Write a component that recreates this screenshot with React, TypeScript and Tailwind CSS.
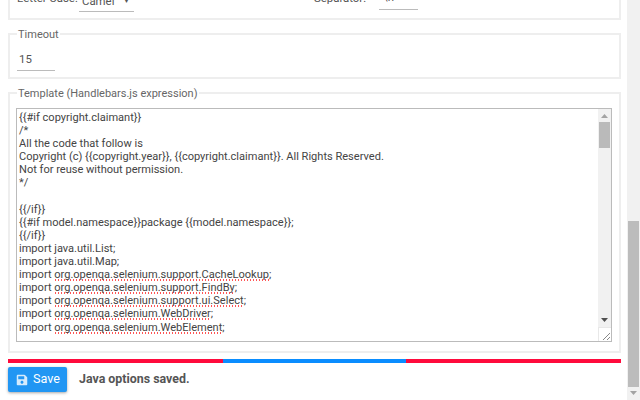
import { FaSave } from "react-icons/fa"

type Line = { text?: string; pre?: string; typo?: string; post?: string }

const lines: Line[] = [
  { text: "{{#if copyright.claimant}}" },
  { text: "/*" },
  { text: "All the code that follow is" },
  { text: "Copyright (c) {{copyright.year}}, {{copyright.claimant}}. All Rights Reserved." },
  { text: "Not for reuse without permission." },
  { text: "*/" },
  { text: "" },
  { text: "{{/if}}" },
  { text: "{{#if model.namespace}}package {{model.namespace}};" },
  { text: "{{/if}}" },
  { text: "import java.util.List;" },
  { text: "import java.util.Map;" },
  { pre: "import ", typo: "org.openqa.selenium.support.CacheLookup", post: ";" },
  { pre: "import ", typo: "org.openqa.selenium.support.FindBy", post: ";" },
  { pre: "import ", typo: "org.openqa.selenium.support.ui.Select", post: ";" },
  { pre: "import ", typo: "org.openqa.selenium.WebDriver", post: ";" },
  { pre: "import ", typo: "org.openqa.selenium.WebElement", post: ";" },
]

function Group({ legend, children, className }: { legend?: string; children: React.ReactNode; className?: string }) {
  return (
    <fieldset className={"shrink-0 border-2 border-[#eeeeee] pl-[6px] pr-[7px] " + (className ?? "")}>
      {legend && (
        <legend className="ml-[1px] px-[1px] text-[11px] leading-[14px] text-[#666]">
          <span className="relative top-[1px]">{legend}</span>
        </legend>
      )}
      {children}
    </fieldset>
  )
}

export default function App() {
  return (
    <div className="flex h-[400px] w-[640px] overflow-hidden bg-white font-['Roboto',sans-serif]">
      <div className="flex min-w-0 flex-1 flex-col justify-end pb-2 pl-2 pr-[6px]">
        <Group className="h-[45px]">
          <div className="flex h-[35px] items-end text-[11.4px] leading-[14px] text-[#555]">
            <span className="mb-[7px] ml-[1px] w-[62px]">Letter Case:</span>
            <div className="flex h-[24px] w-[55px] items-center justify-between border-b border-[#bbb] pl-[3px] pr-[4px] pt-[1px]">
              <span className="mt-[1px]">Camel</span>
              <span className="mt-[1px] text-[7px]">▼</span>
            </div>
            <span className="mb-[7px] ml-[180px] w-[65px]">Separator:</span>
            <div className="mb-[2px] h-[24px] w-[39px] border-b border-[#bbb] pl-[4px] pt-[4px]">\n</div>
          </div>
        </Group>

        <Group legend="Timeout" className="mt-[7px] h-[52px]">
          <div className="ml-[1px] mt-[5px] h-[25px] w-[38px] border-b border-[#bbb] pl-[2px] text-[11.4px] leading-[26px] text-[#555]">15</div>
        </Group>

        <Group legend="Template (Handlebars.js expression)" className="mt-[7px] h-[267px]">
          <div className="relative mt-[8px] h-[234px] overflow-hidden border border-[#bbbbbb] pl-[2px] pt-[2px] text-[11.06px] leading-[13.1px] text-[#444]">
            {lines.map((l, i) => (
              <div key={i} className="h-[13.1px] whitespace-pre">
                {l.typo ? (
                  <>
                    {l.pre}
                    <span className="bg-[radial-gradient(circle,#f55_0.8px,transparent_1.1px)] bg-[length:3px_2px] bg-[position:0_100%] bg-repeat-x">{l.typo}</span>
                    {l.post}
                  </>
                ) : (
                  l.text
                )}
              </div>
            ))}
            <div className="absolute right-0 top-0 flex h-[218px] w-[13px] flex-col items-center bg-[#f1f1f1]">
              <svg className="mt-[5px]" width="7" height="4" viewBox="0 0 7 4"><path d="M3.5 0L7 4H0z" fill="#a3a3a3" /></svg>
              <div className="mt-[4px] h-[26px] w-[11px] bg-[#bababa]" />
              <svg className="mb-[5px] mt-auto" width="7" height="4" viewBox="0 0 7 4"><path d="M0 0h7L3.5 4z" fill="#505050" /></svg>
            </div>
            <div className="absolute bottom-0 right-0 h-[14px] w-[13px] border-l border-t border-[#e8e8e8] bg-white">
              <svg width="12" height="13" viewBox="0 0 12 13"><path d="M4 12L11 5M8 12L11 9" stroke="#888" strokeWidth="1" /></svg>
            </div>
          </div>
        </Group>

        <div className="mt-[6px] flex h-[4px] shrink-0">
          <div className="w-[215px] bg-[#ff0a3c]" />
          <div className="w-[183px] bg-[#0a8dff]" />
          <div className="flex-1 bg-[#ff0a3c]" />
        </div>

        <div className="mt-[4px] flex h-[25px] shrink-0 items-center gap-3">
          <button className="flex h-[25px] w-[59px] items-center gap-[5px] rounded-[2px] bg-[#2196f3] pl-[8px] text-[12.6px] text-white shadow-[0_1px_3px_rgba(0,0,0,0.35)]">
            <FaSave size={12} color="#d6ebfc" />
            Save
          </button>
          <span className="text-[12.4px] font-bold text-[#555]">Java options saved.</span>
        </div>
      </div>

      <div className="flex w-[13px] shrink-0 flex-col items-center bg-[#f1f1f1]">
        <div className="mt-[221px] h-[166px] w-[11px] bg-[#bcbcbc]" />
        <svg className="mt-[4px]" width="7" height="4" viewBox="0 0 7 4"><path d="M0 0h7L3.5 4z" fill="#a3a3a3" /></svg>
      </div>
    </div>
  )
}
